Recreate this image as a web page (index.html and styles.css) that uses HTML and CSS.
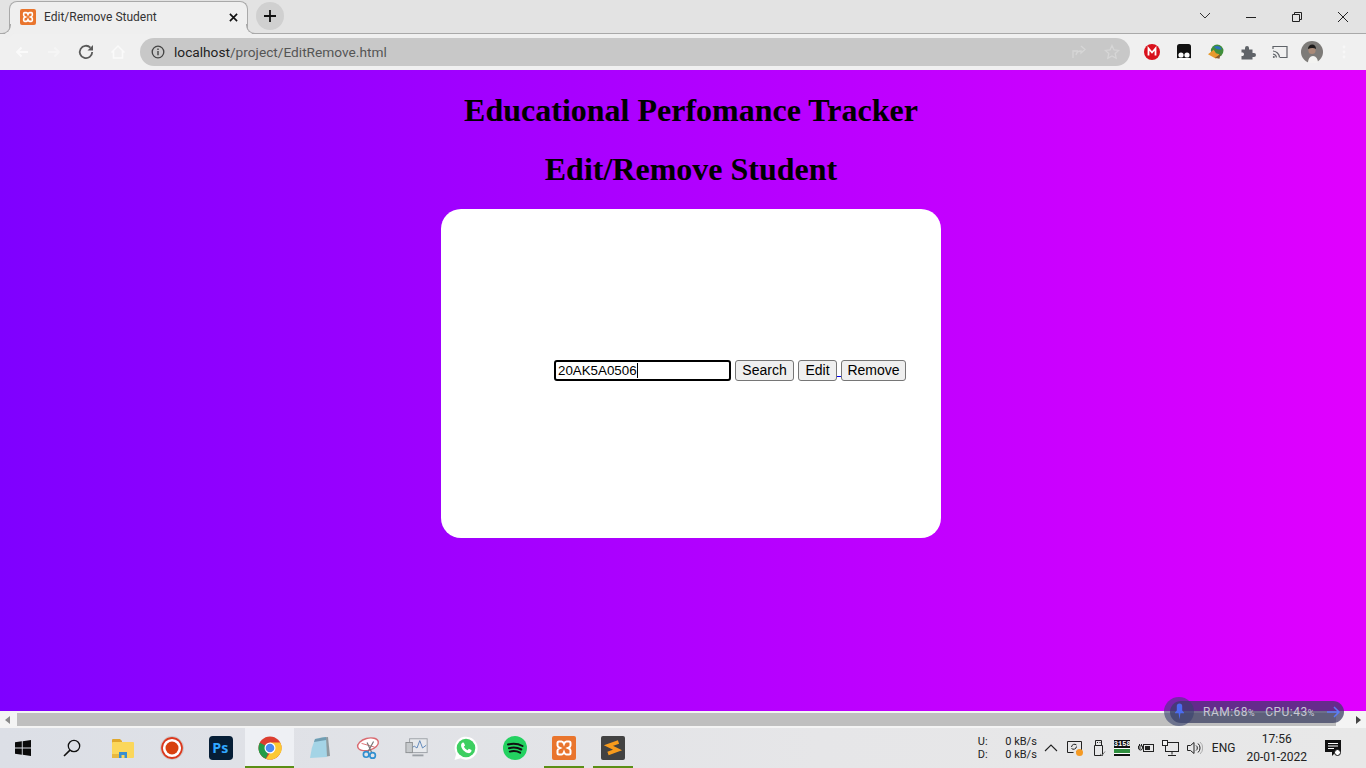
FILE: index.html
```html
<!DOCTYPE html>
<html lang="en">
<head>
    <meta charset="UTF-8">
    <title>Edit/Remove Student</title>
    <link rel="stylesheet" href="styles.css">
</head>
<body>
    <!-- Browser tab strip -->
    <div class="tabstrip">
        <div class="tab">
            <svg class="favicon" viewBox="0 0 24 24"><rect width="24" height="24" rx="3" fill="#e9752d"/><path d="M7 5.500h2.500q1.500 0 2.500 2.500 1-2.500 2.500-2.500H17q1.500 0 1.500 1.500v2.500q0 1.500-2.500 2.500 2.500 1 2.500 2.500V17q0 1.500-1.500 1.500h-2.500q-1.500 0-2.500-2.500-1 2.500-2.500 2.500H7q-1.500 0-1.500-1.500v-2.500q0-1.500 2.500-2.500-2.500-1-2.500-2.500V7q0-1.500 1.500-1.500z" fill="none" stroke="#fff" stroke-width="2.400"/></svg>
            <span class="tab-title">Edit/Remove Student</span>
            <svg class="tab-close" viewBox="0 0 10 10"><path d="M1 1l8 8M9 1l-8 8" stroke="#111" stroke-width="1.800"/></svg>
        </div>
        <div class="new-tab"><svg viewBox="0 0 12 12"><path d="M6 0v12M0 6h12" stroke="#111" stroke-width="1.800"/></svg></div>
        <div class="window-controls">
            <svg class="win-btn" viewBox="0 0 46 20"><path d="M18 6l5 5 5-5" fill="none" stroke="#333"/></svg>
            <svg class="win-btn" viewBox="0 0 46 20"><path d="M18 10.500h10" stroke="#222"/></svg>
            <svg class="win-btn" viewBox="0 0 46 20"><path d="M18.500 7.500h7v7h-7zM20.500 7.500v-2h7v7h-2" fill="none" stroke="#222"/></svg>
            <svg class="win-btn" viewBox="0 0 46 20"><path d="M18 5l10 10M28 5L18 15" stroke="#222"/></svg>
        </div>
    </div>

    <!-- Browser toolbar -->
    <div class="toolbar">
        <svg class="tool-icon" viewBox="0 0 16 16"><path d="M14 8H3M7.500 3.500L3 8l4.500 4.500" fill="none" stroke="#fafafa" stroke-width="1.800"/></svg>
        <svg class="tool-icon" viewBox="0 0 16 16"><path d="M2 8h11M8.500 3.500L13 8l-4.500 4.500" fill="none" stroke="#f5f5f5" stroke-width="1.800"/></svg>
        <svg class="tool-icon" viewBox="0 0 16 16"><path d="M14.200 8a6.200 6.200 0 1 1-1.800-4.400" fill="none" stroke="#5a5a5a" stroke-width="1.800"/><path d="M15 1v5.500H9.500z" fill="#5a5a5a"/></svg>
        <svg class="tool-icon" viewBox="0 0 16 16"><path d="M1.500 8.500L8 2l6.500 6.500M3.500 7v7h9V7" fill="none" stroke="#fafafa" stroke-width="1.500"/></svg>
        <div class="omnibox">
            <svg class="info-icon" viewBox="0 0 14 14"><circle cx="7" cy="7" r="5.800" fill="none" stroke="#444" stroke-width="1.300"/><path d="M7 6v4.200M7 3.500v1.400" stroke="#444" stroke-width="1.400"/></svg>
            <span class="url"><span class="url-host">localhost</span>/project/EditRemove.html</span>
            <svg class="omni-icon" viewBox="0 0 16 16"><path d="M2 14V7h5M10 2l4 3.500L10 9V7C7 7 5.500 8.500 5 11" fill="none" stroke="#d6d6d6" stroke-width="1.300"/></svg>
            <svg class="omni-icon" viewBox="0 0 16 16"><path d="M8 1.500l2 4.400 4.700.5-3.500 3.200 1 4.700L8 11.900l-4.200 2.400 1-4.700L1.300 6.400 6 5.900z" fill="none" stroke="#d6d6d6" stroke-width="1.300"/></svg>
        </div>
        <div class="extensions">
            <svg class="ext-icon" viewBox="0 0 16 16"><circle cx="8" cy="8" r="8" fill="#d9111c"/><path d="M4.500 11.500v-7L8 8.500l3.500-4v7" fill="none" stroke="#fff" stroke-width="1.800"/></svg>
            <svg class="ext-icon" viewBox="0 0 16 16"><rect x="1" width="14" height="16" rx="2.500" fill="#111"/><rect x="1" y="14" width="14" height="2" rx="1" fill="#fff"/><circle cx="5" cy="11" r="2.600" fill="#fff"/><circle cx="11" cy="11" r="2.600" fill="#fff"/></svg>
            <svg class="ext-icon" viewBox="1 1 14 14"><circle cx="9" cy="7" r="5.500" fill="#3f8f3a"/><path d="M6 3.500c3-1.500 6-.5 7 2-2 .5-4 1-7-2z" fill="#2d6fc0"/><path d="M1 10l5-4 2 3 3 1-3 4z" fill="#e89a2c"/><path d="M7 13l5-3-1 4z" fill="#8a5a2b"/></svg>
            <svg class="ext-icon" viewBox="0 0 16 16"><path d="M1.500 5.500h3.500V4a2 2 0 0 1 4 0v1.500h3.500V9H14a2 2 0 0 1 0 4h-1.500v2.500h-11V12H3a2 2 0 0 0 0-3.500H1.500z" fill="#5f6368"/></svg>
            <svg class="ext-icon" viewBox="0 0 16 16"><path d="M1 5V2.500h14v11H8" fill="none" stroke="#5f6368" stroke-width="1.200"/><path d="M1 7a7 7 0 0 1 6.500 6.500M1 10a4 4 0 0 1 3.500 3.500" fill="none" stroke="#5f6368" stroke-width="1.200"/><circle cx="1.800" cy="13" r="1" fill="#5f6368"/></svg>
            <svg class="avatar" viewBox="0 0 22 22"><circle cx="11" cy="11" r="11" fill="#7d7b78"/><path d="M7 22c0-4 2-7 5-7s5 3 5 7z" fill="#f3f3f1"/><circle cx="11" cy="9.500" r="3.600" fill="#a98a78"/><path d="M7 8c0-3 2-4.500 4.200-4.500S15 5 15 8c-2-1.200-5-1.200-8 0z" fill="#1c1a1a"/></svg>
            <svg class="menu-dots" viewBox="0 0 4 16"><circle cx="2" cy="3" r="1.400"/><circle cx="2" cy="8" r="1.400"/><circle cx="2" cy="13" r="1.400"/></svg>
        </div>
    </div>

    <!-- Page viewport -->
    <div class="viewport">
        <div class="page">
            <h1>Educational Perfomance Tracker</h1>
            <h1>Edit/Remove Student</h1>
            <div class="card">
                <form class="search-form" onsubmit="return false">
                    <span class="input-wrap"><input type="text" class="student-id" value="20AK5A0506"><span class="caret"></span></span>
                    <button class="btn-search">Search</button>
                    <a href="#" class="edit-link"><button type="button" class="btn-edit">Edit</button> </a><a href="#"><button type="button" class="btn-remove">Remove</button></a>
                </form>
            </div>
        </div>
    </div>

    <!-- Horizontal scrollbar -->
    <div class="hscroll">
        <svg class="scroll-arrow" viewBox="0 0 6 8"><path d="M5 0v8L0 4z" fill="#8a8a8a"/></svg>
        <div class="scroll-track"><div class="scroll-thumb"></div></div>
        <svg class="scroll-arrow" viewBox="0 0 6 8"><path d="M1 0v8l5-4z" fill="#444"/></svg>
    </div>

    <!-- Resource meter floating over the scrollbar -->
    <div class="meter">
        <div class="meter-knob"><svg class="meter-pin" viewBox="0 0 10 18"><path d="M5 0a3 3 0 0 1 3 3v5l2 2v1H6l-1 7-1-7H0v-1l2-2V3a3 3 0 0 1 3-3z" fill="#4b6cf0"/></svg></div>
        <span class="meter-text">RAM:68<small>%</small></span>
        <span class="meter-text">CPU:43<small>%</small></span>
        <svg class="meter-arrow" viewBox="0 0 14 12"><path d="M0 6h12M7 1l5 5-5 5" fill="none" stroke="#5a7cf5" stroke-width="1.500"/></svg>
    </div>

    <!-- Windows taskbar -->
    <div class="taskbar">
        <div class="task-items">
            <div class="task-item shifted"><svg viewBox="0 0 16 16" class="ti-start"><path d="M0 2.300L6.800 1.300V7.600H0zM7.700 1.200L16 0V7.600H7.700zM0 8.400H6.800V14.700L0 13.700zM7.700 8.400H16V16L7.700 14.800z" fill="#0a0a0a"/></svg></div>
            <div class="task-item shifted"><svg viewBox="0 0 18 18" class="ti-search"><circle cx="11" cy="7" r="5.700" fill="none" stroke="#111" stroke-width="1.300"/><path d="M7 11.200L1 17" stroke="#111" stroke-width="1.600"/></svg></div>
            <div class="task-item"><svg viewBox="0 0 24 22"><path d="M1 3q0-1 1-1h7l2 2h0v3H1z" fill="#e0a82c"/><rect x="1" y="5" width="22" height="16" rx="1" fill="#fbd75b"/><path d="M8 21v-6h8v6h-2.500v-3h-3v3z" fill="#3a8fd0"/><rect x="1" y="17" width="7" height="4" fill="#e8b93f"/></svg></div>
            <div class="task-item"><svg viewBox="0 0 24 24"><circle cx="12" cy="12" r="11.500" fill="#fff" stroke="#999" stroke-width=".5"/><circle cx="12" cy="12" r="10" fill="none" stroke="#d8391f" stroke-width="1.800"/><circle cx="12" cy="12" r="6.500" fill="#d8410f"/></svg></div>
            <div class="task-item"><svg viewBox="0 0 22 22"><rect width="22" height="22" rx="3.500" fill="#061e36"/><text x="3" y="16" class="ps-label">Ps</text></svg></div>
            <div class="task-item active"><svg viewBox="0 0 24 24"><circle cx="12" cy="12" r="11.500" fill="#dc3e30"/><path d="M12 12L1.800 6.700A11.500 11.500 0 0 0 8 22.800z" fill="#239c48"/><path d="M12 6.500h10.200A11.500 11.500 0 0 1 8 22.800L12 17z" fill="#fbc933"/><circle cx="12" cy="12" r="5.500" fill="#fff"/><circle cx="12" cy="12" r="4.300" fill="#4a8af2"/></svg></div>
            <div class="task-item"><svg viewBox="0 0 24 24"><path d="M12 2l9-1 2 19-7 1z" fill="#8f9a9e"/><path d="M8 3l11-2 1 20-17 1q1-10 5-19z" fill="#a4d4e6"/><path d="M8 3l11-2 .2 3L7 6z" fill="#6f9db2"/></svg></div>
            <div class="task-item"><svg viewBox="0 0 26 24"><ellipse cx="13" cy="8" rx="11.500" ry="6.500" fill="#fff" stroke="#d96a70" stroke-width="1.500" transform="rotate(-15 13 8)"/><path d="M6 7l14 4" stroke="#d96a70"/><path d="M12 6l5 11M19 5l-6 11" stroke="#777" stroke-width="1.300"/><circle cx="11" cy="19" r="3" fill="none" stroke="#2f8fd0" stroke-width="1.800"/><circle cx="18" cy="20" r="3" fill="none" stroke="#2f8fd0" stroke-width="1.800"/></svg></div>
            <div class="task-item"><svg viewBox="0 0 26 24"><rect x="5" y="2" width="19" height="15" fill="#e7e9ec" stroke="#9a9fa5"/><path d="M6 13l4-3 3 2 3-8 3 8 4-3" fill="none" stroke="#5b84b8"/><rect x="1" y="6" width="7" height="11" fill="#c6c9cc" stroke="#8c8f92"/><path d="M8 20h12" stroke="#9a9fa5" stroke-width="2"/></svg></div>
            <div class="task-item"><svg viewBox="0 0 24 24"><path d="M.5 24l1.700-6A11.500 11.500 0 1 1 6.500 22.200z" fill="#fff"/><circle cx="12" cy="12" r="9.300" fill="#3dcf61"/><path d="M8.800 6.500c-1 .5-2 1.600-1.700 3.400.5 3 3.700 6.400 7 7.200 1.700.3 2.900-.7 3.300-1.800l.1-1.200-2.700-1.300-1.200 1.400c-1.700-.6-3-2-3.700-3.600l1.200-1.200-1.200-2.700z" fill="#fff"/></svg></div>
            <div class="task-item"><svg viewBox="0 0 24 24"><circle cx="12" cy="12" r="12" fill="#23d160"/><path d="M5 8.500c5-1.400 10-1 14.500 1.500M6 12.200c4.300-1.100 8.500-.8 12.300 1.300M6.800 15.600c3.600-.9 7.200-.6 10.300 1.100" fill="none" stroke="#111" stroke-width="2" stroke-linecap="round"/></svg></div>
            <div class="task-item running"><svg viewBox="0 0 24 24"><rect width="24" height="24" rx="2" fill="#e9752d"/><path d="M7 5.500h2.500q1.500 0 2.500 2.500 1-2.500 2.500-2.500H17q1.500 0 1.500 1.500v2.500q0 1.500-2.500 2.500 2.500 1 2.500 2.500V17q0 1.500-1.500 1.500h-2.500q-1.500 0-2.500-2.500-1 2.500-2.500 2.500H7q-1.500 0-1.500-1.500v-2.500q0-1.500 2.500-2.500-2.500-1-2.500-2.500V7q0-1.500 1.500-1.500z" fill="none" stroke="#fff" stroke-width="2"/></svg></div>
            <div class="task-item running"><svg viewBox="0 0 24 24"><rect width="24" height="24" rx="2" fill="#424242"/><path d="M17.500 6L7.500 9.500 16.500 14 7 17.500" fill="none" stroke="#f89b1c" stroke-width="3.600"/></svg></div>
        </div>

        <div class="tray">
            <div class="net-speed">
                <div class="net-row"><span>U:</span><span>0 kB/s</span></div>
                <div class="net-row"><span>D:</span><span>0 kB/s</span></div>
            </div>
            <svg class="tray-chevron" viewBox="0 0 14 8"><path d="M1 7l6-6 6 6" fill="none" stroke="#222" stroke-width="1.100"/></svg>
            <svg class="tray-icon" viewBox="0 0 18 18"><path d="M1.500 2.500h14v10h-5M1.500 2.500v11h6" fill="none" stroke="#222"/><path d="M5.500 8a3 3 0 0 1 5-2M10.500 7.500a3 3 0 0 1-5 2" fill="none" stroke="#222"/><circle cx="13.500" cy="13.500" r="3.500" fill="#f59a23"/></svg>
            <svg class="tray-icon" viewBox="0 0 18 18"><path d="M5.500 1.500h6v5h-6zM4.500 6.500h8v10h-8z" fill="none" stroke="#222"/><path d="M7 3.500h1M9.500 3.500h1" stroke="#222"/><path d="M10 15l2 1.500 3-4" fill="none" stroke="#777"/></svg>
            <div class="clock-chip"><span class="chip-text">3158</span></div>
            <svg class="tray-icon" viewBox="0 0 18 18"><rect x="6.500" y="5.500" width="10" height="7" fill="none" stroke="#222"/><rect x="8" y="7" width="5" height="4" fill="#222"/><path d="M1 9h3M2.500 5v2M4.500 5v2M1.500 7h4v2a2 2 0 0 1-4 0z" fill="none" stroke="#222"/></svg>
            <svg class="tray-icon" viewBox="0 0 18 18"><rect x="4.500" y="3.500" width="13" height="9" fill="none" stroke="#222"/><rect x="1.500" y="1.500" width="5" height="5" fill="#f2f2f2" stroke="#222"/><path d="M11 12.500v3M7 16.500h8" stroke="#222"/></svg>
            <svg class="tray-icon" viewBox="0 0 18 18"><path d="M2.500 6.500h3l3.500-3v11l-3.500-3h-3z" fill="none" stroke="#222"/><path d="M11 6.500a3 3 0 0 1 0 5M13 4.500a6 6 0 0 1 0 9" fill="none" stroke="#222"/><path d="M15 3a8 8 0 0 1 0 12" fill="none" stroke="#aaa"/></svg>
            <span class="lang">ENG</span>
            <div class="clock"><span>17:56</span><span>20-01-2022</span></div>
            <svg class="notify" viewBox="0 0 18 18"><path d="M1 1h16v12h-5l-4 4v-4H1z" fill="#111"/><path d="M4 4.500h10M4 7h10M4 9.500h6" stroke="#fff"/><circle cx="13.500" cy="13.500" r="3" fill="#fff" stroke="#111"/></svg>
        </div>
    </div>
</body>
</html>
```

FILE: styles.css
```css
* {
    box-sizing: border-box;
}

html, body {
    margin: 0;
    height: 100%;
    overflow: hidden;
}

body {
    display: flex;
    flex-direction: column;
    height: 768px;
    position: relative;
    font-family: Roboto, "Liberation Sans", sans-serif;
    background-color: #f0f0f0;
}

/* Tab strip */
.tabstrip {
    display: flex;
    align-items: flex-end;
    height: 34px;
    flex-shrink: 0;
    background-color: #e3e3e3;
    border-bottom: 1px solid #a9a9a9;
    padding-left: 9px;
}

.tab {
    position: relative;
    display: flex;
    align-items: center;
    width: 239px;
    height: 33px;
    margin-bottom: -1px;
    padding: 0 6px 2px 10px;
    background-color: #efefef;
    border: 1px solid #a9a9a9;
    border-bottom: none;
    border-radius: 8px 8px 0 0;
}

/* the little flares at the foot of the active tab */
.tab::before,
.tab::after {
    content: "";
    position: absolute;
    bottom: 0;
    width: 9px;
    height: 9px;
    border-bottom: 1px solid #a9a9a9;
}

.tab::before {
    left: -9px;
    border-right: 1px solid #a9a9a9;
    border-bottom-right-radius: 9px;
    box-shadow: 4px 4px 0 #efefef;
}

.tab::after {
    right: -9px;
    border-left: 1px solid #a9a9a9;
    border-bottom-left-radius: 9px;
    box-shadow: -4px 4px 0 #efefef;
}

.favicon {
    width: 16px;
    height: 16px;
    margin-right: 8px;
}

.tab-title {
    flex: 1;
    font-size: 12px;
    color: #333;
}

.tab-close {
    width: 9px;
    height: 9px;
    margin-right: 3px;
}

.new-tab {
    display: flex;
    align-items: center;
    justify-content: center;
    width: 28px;
    height: 28px;
    margin: 0 0 3px 8px;
    border-radius: 50%;
    background-color: #d0d0d0;
}

.new-tab svg {
    width: 12px;
    height: 12px;
}

.window-controls {
    display: flex;
    align-items: center;
    height: 33px;
    margin-left: auto;
}

.win-btn {
    width: 46px;
    height: 20px;
}

/* Toolbar */
.toolbar {
    display: flex;
    align-items: center;
    height: 36px;
    flex-shrink: 0;
    padding-left: 14px;
    background-color: #f0f0f0;
}

.tool-icon {
    width: 16px;
    height: 16px;
    margin-right: 16px;
}

.omnibox {
    display: flex;
    align-items: center;
    width: 990px;
    height: 28px;
    margin-left: -2px;
    padding: 0 10px 0 11px;
    background-color: #c8c8c8;
    border-radius: 14px;
}

.info-icon {
    width: 14px;
    height: 14px;
    margin-right: 9px;
}

.url {
    flex: 1;
    font-size: 13.7px;
    color: #555;
}

.url-host {
    color: #222;
}

.omni-icon {
    width: 16px;
    height: 16px;
    margin-left: 17px;
}

.extensions {
    display: flex;
    align-items: center;
    padding-left: 14px;
}

.ext-icon {
    width: 16px;
    height: 16px;
    margin-right: 16px;
}

.avatar {
    width: 22px;
    height: 22px;
    margin-left: -3px;
    margin-right: 19px;
}

.menu-dots {
    width: 4px;
    height: 16px;
    fill: #f7f7f7;
}

/* Page */
.viewport {
    flex: 1;
    overflow: hidden;
    background: linear-gradient(to right, #7f00ff, #e100ff);
}

.page {
    width: 1382px;
    height: 100%;
    overflow: hidden;
}

h1 {
    margin: 22px 0 0;
    font-family: "Liberation Serif", serif;
    font-size: 32px;
    line-height: 37px;
    text-align: center;
    color: #000;
}

.card {
    display: flex;
    align-items: center;
    width: 500px;
    height: 329px;
    margin: 21px auto 0;
    padding: 0 0 6px 113px;
    background-color: #fff;
    border-radius: 20px;
}

.search-form {
    font-family: "Liberation Serif", serif;
    font-size: 16px;
    white-space: nowrap;
}

.search-form button {
    font-family: "Liberation Sans", sans-serif;
    font-size: 14px;
    height: 21px;
    padding: 1px 0;
    color: #000;
    background-color: #efefef;
    border: 1px solid #767676;
    border-radius: 3px;
}

.search-form .btn-search {
    width: 59px;
}

.search-form .btn-edit {
    width: 39px;
}

.search-form .btn-remove {
    width: 65px;
}

.input-wrap {
    position: relative;
    display: inline-block;
}

.student-id {
    display: block;
    width: 177px;
    height: 21px;
    padding: 1px 2px;
    font-family: "Liberation Sans", sans-serif;
    font-size: 13.333px;
    color: #000;
    border: 2px solid #000;
    border-radius: 3px;
    outline: none;
}

.caret {
    position: absolute;
    left: 83px;
    top: 3px;
    height: 15px;
    border-left: 1px solid #000;
}

.edit-link {
    color: #0000ee;
}

/* Horizontal scrollbar */
.hscroll {
    display: flex;
    align-items: center;
    height: 17px;
    flex-shrink: 0;
    background-color: #f4f4f4;
}

.scroll-arrow {
    flex-shrink: 0;
    width: 6px;
    height: 8px;
    margin: 0 5px;
}

.scroll-track {
    flex: 1;
    height: 13px;
    margin-left: 1px;
    padding-right: 14px;
}

.scroll-thumb {
    height: 100%;
    background-color: #bfbfbf;
}

.meter {
    position: absolute;
    left: 1170px;
    top: 701px;
    width: 174px;
    height: 22px;
    display: flex;
    align-items: center;
    gap: 10px;
    padding: 0 3px 0 33px;
    border-radius: 11px;
    background-color: rgba(55, 60, 95, 0.72);
}

.meter-knob {
    position: absolute;
    left: -6px;
    top: -4px;
    display: flex;
    align-items: center;
    justify-content: center;
    width: 30px;
    height: 29px;
    border-radius: 50%;
    background-color: rgba(55, 65, 110, 0.6);
}

.meter-pin {
    width: 9px;
    height: 17px;
}

.meter-text {
    font-size: 12px;
    letter-spacing: 0.5px;
    color: #c8c8d4;
}

.meter-text small {
    font-size: 9px;
}

.meter-arrow {
    width: 14px;
    height: 12px;
    margin-left: auto;
}

/* Taskbar */
.taskbar {
    display: flex;
    justify-content: space-between;
    height: 40px;
    flex-shrink: 0;
    background: linear-gradient(to right, #dcdfe6, #e6e6e8 60%, #e8e8e8);
}

.task-items {
    display: flex;
}

.task-item {
    display: flex;
    align-items: center;
    justify-content: center;
    width: 49px;
    height: 40px;
}

.task-item svg {
    width: 24px;
    height: 24px;
}

.task-item .ti-start {
    width: 16px;
    height: 16px;
}

.task-item .ti-search {
    width: 18px;
    height: 18px;
}

.task-item.shifted {
    padding-right: 4px;
}

.task-item.active {
    background-color: #eef0f4;
    box-shadow: inset 0 -2px 0 #5b8f15;
}

.task-item.running {
    background: linear-gradient(#5b8f15, #5b8f15) center bottom / 40px 2px no-repeat;
}

.ps-label {
    font-family: "Open Sans", sans-serif;
    font-size: 13px;
    font-weight: 700;
    fill: #31a8ff;
}

.tray {
    display: flex;
    align-items: center;
    padding-right: 24px;
}

.net-speed {
    width: 59px;
    margin-right: 7px;
    font-size: 11px;
    line-height: 13px;
    color: #222;
}

.net-row {
    display: flex;
    justify-content: space-between;
}

.tray-chevron {
    width: 14px;
    height: 8px;
    margin-right: 8px;
}

.tray-icon {
    width: 18px;
    height: 18px;
    margin-right: 6px;
}

.clock-chip {
    width: 16px;
    height: 16px;
    margin: 0 7px 0 0;
    overflow: hidden;
    background: linear-gradient(#111 0 8px, #fff 8px 9px, #2f8f3f 9px 13px, #fff 13px 14px, #111 14px);
}

.chip-text {
    display: block;
    font-family: "Liberation Mono", monospace;
    font-size: 7px;
    line-height: 8px;
    font-weight: 700;
    color: #fff;
    text-align: center;
}

.lang {
    margin: 0 11px 0 3px;
    font-size: 12px;
    color: #222;
}

.clock {
    display: flex;
    flex-direction: column;
    align-items: center;
    margin-right: 17px;
    font-size: 12px;
    line-height: 18px;
    color: #222;
}

.notify {
    width: 18px;
    height: 18px;
}
```
